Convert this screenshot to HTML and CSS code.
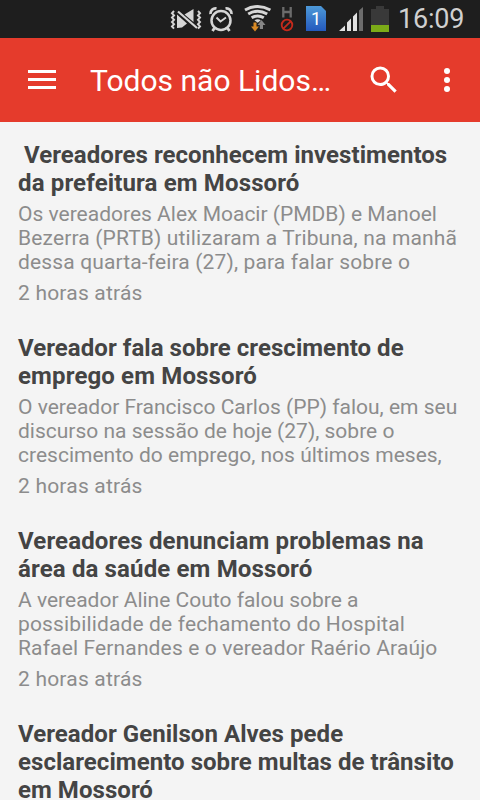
FILE: index.html
```html
<!DOCTYPE html>
<html lang="pt-BR">
<head>
    <meta charset="UTF-8">
    <title>Todos não Lidos</title>
    <link rel="stylesheet" href="styles.css">
</head>
<body>
    <div class="status-bar">
        <svg class="status-icons" width="230" height="38" viewBox="160 0 230 38">
            <!-- silencioso / vibrar -->
            <g fill="none" stroke="#d6d6d6" stroke-width="2">
                <path d="M174 11l-2 2.200 2 2.200-2 2.200 2 2.200-2 2.200 2 2.200-2 2.200 2 2.200M198 11l2 2.200-2 2.200 2 2.200-2 2.200 2 2.200-2 2.200 2 2.200-2 2.200"/>
            </g>
            <path d="M177 14.500v13.500l5-.5 5-4zM184.500 14.500l9-5.500v13z" fill="#d6d6d6"/>
            <path d="M178 11.500l19 16.500" stroke="#d6d6d6" stroke-width="2.200"/>
            <!-- alarme -->
            <circle cx="221" cy="20.500" r="9.500" fill="none" stroke="#d6d6d6" stroke-width="2.500"/>
            <path d="M210.500 14a5 5 0 0 1 6-5.500M231.500 14a5 5 0 0 0-6-5.500M214.500 28l-2 3M227.500 28l2 3" fill="none" stroke="#d6d6d6" stroke-width="2.800"/>
            <path d="M216.500 17.500l4 4 5.500-4" fill="none" stroke="#d6d6d6" stroke-width="2"/>
            <!-- wifi -->
            <g fill="none" stroke="#d6d6d6" stroke-width="3">
                <path d="M245 10q12.700-7 25.400 0M248.200 14q9.500-5.500 19 0M251.600 17.800q6.100-3.600 12.200 0"/>
            </g>
            <path d="M254.500 20.300q3.200-2 6.400 0l-3.200 2.500z" fill="#d6d6d6"/>
            <path d="M253.500 22.500h3v4h2.500l-4 5-4-5h2.500z" fill="#d98a25"/>
            <path d="M259.800 29v-4h-2.300l4-5 4 5h-2.500v4z" fill="#858585"/>
            <!-- rede H bloqueada -->
            <path d="M283.300 7v10.500M290.700 7v10.500M283 12h8" stroke="#6b6b6b" stroke-width="2.300"/>
            <circle cx="287" cy="25" r="5.300" fill="none" stroke="#c62a1c" stroke-width="1.800"/>
            <path d="M283.300 28.700l7.400-7.400" stroke="#c62a1c" stroke-width="1.800"/>
            <!-- chip -->
            <defs>
                <linearGradient id="sim" x1="0" y1="0" x2="0" y2="1">
                    <stop offset="0" stop-color="#4d99d8"/>
                    <stop offset="1" stop-color="#2459bd"/>
                </linearGradient>
            </defs>
            <path d="M306 6h15l5 5v20h-20z" fill="url(#sim)"/>
            <text class="sim-number" x="316" y="25" text-anchor="middle">1</text>
            <!-- sinal -->
            <path d="M339 31l6-5.500v5.500zM347 31v-8.500l4-4v12.500zM353 31v-14.500l4-4v18.500z" fill="#e2e2e2"/>
            <path d="M359 31v-20.500l4-3.500v24z" fill="#6c6c6c"/>
            <!-- bateria -->
            <path d="M371 9h5v-3h8v3h5v16h-18z" fill="#393939"/>
            <path d="M371 25h18v7h-18z" fill="#7cab18"/>
        </svg>
        <span class="clock">16:09</span>
    </div>

    <header class="toolbar">
        <svg class="menu-icon" width="28" height="20" viewBox="0 0 28 20">
            <path d="M0 0h28v3H0zM0 8h28v3H0zM0 16h28v3H0z" fill="#fff"/>
        </svg>
        <h1 class="toolbar-title">Todos não Lidos…</h1>
        <svg class="search-icon" width="36" height="36" viewBox="0 0 24 24">
            <path d="M15.500 14h-.79l-.28-.27A6.471 6.471 0 0 0 16 9.500 6.500 6.500 0 1 0 9.500 16c1.610 0 3.090-.59 4.230-1.570l.27.28v.79l5 4.990L20.490 19l-4.990-5zm-6 0C7.010 14 5 11.990 5 9.500S7.010 5 9.500 5 14 7.010 14 9.500 11.990 14 9.500 14z" fill="#fff"/>
        </svg>
        <svg class="more-icon" width="6" height="24" viewBox="0 0 6 24">
            <g fill="#fff">
                <circle cx="3" cy="3" r="3"/>
                <circle cx="3" cy="12" r="3"/>
                <circle cx="3" cy="21" r="3"/>
            </g>
        </svg>
    </header>

    <main class="news-list">
        <article class="news-item">
            <h2 class="news-title">&nbsp;Vereadores reconhecem investimentos<br><span class="wide">da prefeitura em Mossoró</span></h2>
            <p class="news-text">Os vereadores Alex Moacir (PMDB) e Manoel<br><span class="wide">Bezerra (PRTB) utilizaram a Tribuna, na manhã</span><br><span class="wide">dessa quarta-feira (27), para falar sobre o</span></p>
            <p class="news-time">2 horas atrás</p>
        </article>
        <article class="news-item">
            <h2 class="news-title">Vereador fala sobre crescimento de<br><span class="wide">emprego em Mossoró</span></h2>
            <p class="news-text">O vereador Francisco Carlos (PP) falou, em seu<br>discurso na sessão de hoje (27), sobre o<br>crescimento do emprego, nos últimos meses,</p>
            <p class="news-time">2 horas atrás</p>
        </article>
        <article class="news-item">
            <h2 class="news-title"><span class="wide">Vereadores denunciam problemas na<br>área da saúde em Mossoró</span></h2>
            <p class="news-text">A vereador Aline Couto falou sobre a<br><span class="wide">possibilidade de fechamento do Hospital<br>Rafael Fernandes e o vereador Raério Araújo</span></p>
            <p class="news-time">2 horas atrás</p>
        </article>
        <article class="news-item">
            <h2 class="news-title">Vereador Genilson Alves pede<br>esclarecimento sobre multas de trânsito<br>em Mossoró</h2>
        </article>
    </main>
</body>
</html>
```
FILE: styles.css
```css
* {
    box-sizing: border-box;
}
body {
    margin: 0;
    height: 800px;
    overflow: hidden;
    display: flex;
    flex-direction: column;
    font-family: Roboto, sans-serif;
    background: #f4f4f4;
}
h1, h2, p {
    margin: 0;
}
.status-bar {
    flex: none;
    display: flex;
    height: 38px;
    padding-left: 160px;
    background: #1e1e1e;
}
.status-icons {
    flex: none;
}
.sim-number {
    font-size: 18px;
    fill: #fff;
}
.clock {
    margin-left: 8px;
    font-size: 27px;
    line-height: 39px;
    letter-spacing: -0.2px;
    color: #d0d0d0;
    white-space: nowrap;
}
.toolbar {
    flex: none;
    display: flex;
    align-items: center;
    height: 84px;
    padding: 0 30px 0 28px;
    background: #e53b2c;
}
.toolbar-title {
    flex: 1;
    margin-left: 34px;
    padding-top: 2px;
    font-size: 30px;
    font-weight: 400;
    line-height: 36px;
    color: #fff;
    white-space: nowrap;
}
.search-icon {
    margin-right: 42px;
}
.news-list {
    padding: 19px 18px 0;
}
.news-item {
    margin-bottom: 29px;
    white-space: nowrap;
}
.news-title {
    font-size: 24px;
    font-weight: 700;
    line-height: 28px;
    letter-spacing: 0.05px;
    color: #444;
}
.news-text {
    margin-top: 5px;
    font-size: 21px;
    line-height: 24px;
    color: #8c8c8c;
}
.news-time {
    margin-top: 7px;
    font-size: 21px;
    line-height: 24px;
    letter-spacing: 0.2px;
    color: #8c8c8c;
}
.wide {
    letter-spacing: 0.14px;
}
```
